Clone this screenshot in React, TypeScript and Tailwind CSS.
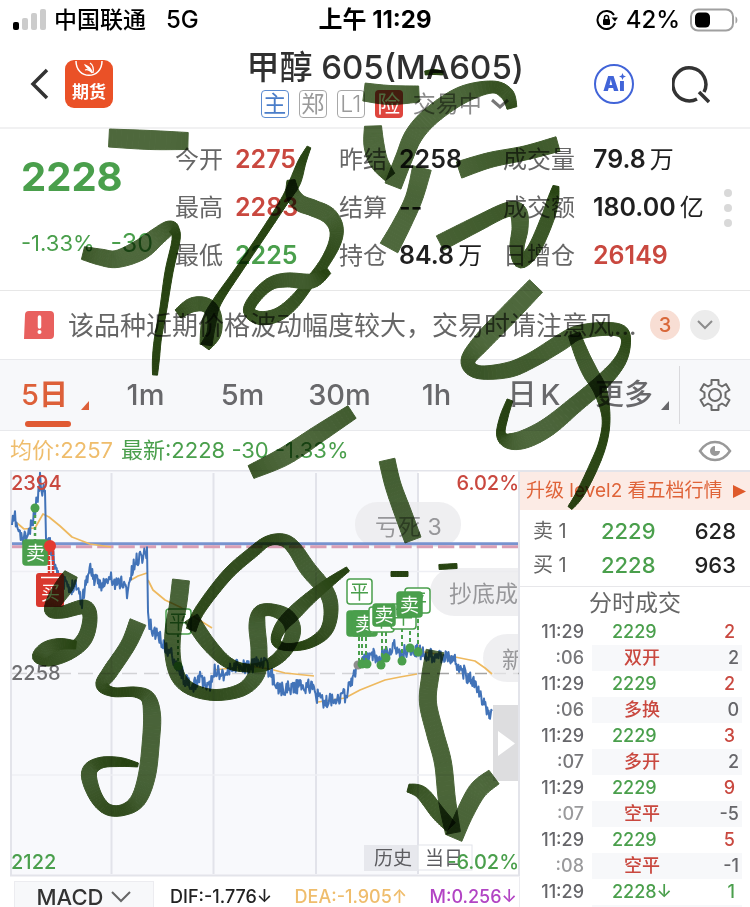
import React from "react";

type Pt = [number, number];
type InkPoint = [number, number, number];

const GREEN = "#4a9f4c";
const ORANGE = "#efbd6c";

const quotes = [
  [
    { label: "今开", value: "2275", tone: "text-[#c9483f]" },
    { label: "最高", value: "2283", tone: "text-[#c9483f]" },
    { label: "最低", value: "2225", tone: "text-[#4a9f4c]" },
  ],
  [
    { label: "昨结", value: "2258", tone: "text-[#1f1f1f]" },
    { label: "结算", value: "--", tone: "text-[#1f1f1f]" },
    { label: "持仓", value: "84.8", unit: "万", tone: "text-[#1f1f1f]" },
  ],
  [
    { label: "成交量", value: "79.8", unit: "万", tone: "text-[#1f1f1f]" },
    { label: "成交额", value: "180.00", unit: "亿", tone: "text-[#1f1f1f]" },
    { label: "日增仓", value: "26149", tone: "text-[#c9483f]" },
  ],
];

const trades = [
  { sec: ":06", price: "2229", lots: "2", kind: "双开", delta: "2" },
  { sec: ":06", price: "2229", lots: "2", kind: "多换", delta: "0" },
  { sec: ":07", price: "2229", lots: "3", kind: "多开", delta: "2" },
  { sec: ":07", price: "2229", lots: "9", kind: "空平", delta: "-5", dim: true },
  { sec: ":08", price: "2229", lots: "5", kind: "空平", delta: "-1", dim: true },
  { sec: ":08", price: "2228", lots: "1", kind: "空换", delta: "0", dim: true, down: true },
];

const priceAnchors: Pt[] = [
  [12, 525], [15, 518], [18, 530], [22, 540], [28, 535], [33, 522], [37, 500], [40, 480], [43, 492], [45, 484],
  [46, 535], [50, 545], [54, 560], [58, 572], [62, 588], [66, 580], [69, 594], [75, 580], [82, 602], [86, 580],
  [91, 568], [95, 582], [100, 583], [105, 584], [111, 578], [115, 585], [122, 581], [127, 592], [133, 568],
  [138, 558], [143, 555], [147, 550], [148, 618], [152, 630], [158, 635], [165, 648], [172, 655], [180, 670],
  [188, 685], [192, 690], [200, 675], [208, 690], [212, 682], [214, 670], [225, 674], [235, 665], [250, 668],
  [262, 660], [272, 676], [280, 690], [290, 687], [300, 686], [314, 687], [317, 696], [325, 703], [335, 697],
  [345, 696], [350, 685], [356, 668], [365, 660], [372, 655], [380, 657], [390, 651], [395, 646], [400, 655],
  [408, 650], [415, 650], [425, 655], [440, 655], [452, 658], [462, 670], [475, 685], [482, 700], [488, 712], [492, 715],
];

function pricePath() {
  let seed = 11;
  const rand = () => {
    seed = (seed * 16807) % 2147483647;
    return seed / 2147483647 - 0.5;
  };
  let d = `M${priceAnchors[0][0]},${priceAnchors[0][1]}`;
  for (let i = 1; i < priceAnchors.length; i++) {
    const [x0, y0] = priceAnchors[i - 1];
    const [x1, y1] = priceAnchors[i];
    const n = Math.max(1, Math.round((x1 - x0) / 0.7));
    for (let k = 1; k <= n; k++) {
      const t = k / n;
      d += `L${(x0 + (x1 - x0) * t).toFixed(1)},${(y0 + (y1 - y0) * t + rand() * 15).toFixed(1)}`;
    }
  }
  return d;
}

function ribbon(points: InkPoint[]) {
  const samples: InkPoint[] = [];
  for (let i = 0; i < points.length - 1; i++) {
    const a = points[Math.max(0, i - 1)];
    const b = points[i];
    const c = points[i + 1];
    const e = points[Math.min(points.length - 1, i + 2)];
    for (let k = 0; k < 8; k++) {
      const t = k / 8;
      const f = (j: 0 | 1 | 2) =>
        0.5 * (2 * b[j] + (c[j] - a[j]) * t + (2 * a[j] - 5 * b[j] + 4 * c[j] - e[j]) * t * t + (3 * b[j] - a[j] - 3 * c[j] + e[j]) * t * t * t);
      samples.push([f(0), f(1), Math.max(3, f(2))]);
    }
  }
  samples.push(points[points.length - 1]);
  const edges = samples.map((p, i) => {
    const q = samples[Math.max(0, i - 1)];
    const r = samples[Math.min(samples.length - 1, i + 1)];
    const dx = r[0] - q[0];
    const dy = r[1] - q[1];
    const len = Math.hypot(dx, dy) || 1;
    const nx = (-dy / len) * (p[2] / 2);
    const ny = (dx / len) * (p[2] / 2);
    return { l: [p[0] + nx, p[1] + ny], r: [p[0] - nx, p[1] - ny], w: p[2] };
  });
  return edges.slice(1).map((e, i) => {
    const s = edges[i];
    const k = Math.min(1, Math.max(0, (e.w - 8) / 10));
    const fill = `rgb(${Math.round(40 + 38 * k)},${Math.round(68 + 36 * k)},${Math.round(18 + 42 * k)})`;
    return { fill, pts: `${s.l} ${e.l} ${e.r} ${s.r}` };
  });
}

const ink: InkPoint[][] = [
  [[109, 138, 18], [150, 140, 19], [188, 141, 17]],
  [[83, 253, 13], [100, 257, 16], [117, 259, 17], [140, 250, 20], [158, 236, 17], [169, 228, 14], [174, 229, 10], [176, 240, 8], [169, 272, 8], [163, 311, 7], [158, 338, 7], [156, 358, 7], [155, 375, 5]],
  [[309, 147, 4], [302, 162, 8], [295, 182, 11], [285, 200, 8], [267, 228, 7], [240, 268, 7], [217, 302, 9], [209, 322, 14], [206, 345, 12]],
  [[178, 314, 10], [192, 305, 14], [206, 305, 14], [214, 315, 14], [214, 333, 14], [205, 347, 10]],
  [[291, 180, 8], [293, 194, 14], [300, 203, 16], [313, 208, 16], [328, 215, 16], [336, 227, 14], [335, 242, 12], [325, 262, 10], [310, 282, 10], [293, 303, 12], [277, 315, 13], [260, 318, 13], [249, 311, 11], [255, 298, 11], [270, 284, 12], [287, 280, 14], [312, 281, 14], [329, 271, 6]],
  [[364, 92, 18], [390, 95, 19], [419, 94, 16]],
  [[512, 108, 10], [507, 94, 13], [492, 87, 12], [462, 95, 17], [432, 115, 18], [414, 135, 18], [404, 158, 17], [393, 186, 17]],
  [[373, 126, 17], [374, 145, 20], [379, 162, 18], [390, 177, 12]],
  [[425, 73, 4], [434, 72, 5], [443, 73, 4]],
  [[459, 170, 17], [490, 160, 15], [525, 153, 14], [558, 144, 15]],
  [[422, 168, 19], [414, 198, 17], [402, 224, 18], [389, 248, 20]],
  [[440, 243, 16], [475, 225, 15], [506, 210, 14], [518, 212, 17], [520, 228, 16], [517, 248, 14], [521, 262, 12], [534, 249, 13], [547, 220, 13], [553, 200, 11], [556, 186, 6]],
  [[536, 286, 18], [508, 315, 19], [482, 342, 18], [468, 361, 14], [478, 372, 13], [508, 370, 15], [532, 360, 15], [560, 343, 16], [577, 333, 14], [602, 329, 13], [621, 331, 12], [626, 342, 9], [620, 361, 12], [602, 382, 15], [575, 405, 16], [548, 427, 18], [525, 439, 18], [509, 441, 15], [501, 434, 9], [504, 417, 8], [510, 400, 6]],
  [[574, 334, 12], [582, 355, 14], [590, 372, 15], [600, 390, 13], [606, 417, 8], [603, 442, 8], [593, 468, 9], [580, 494, 8], [570, 508, 5]],
  [[352, 412, 15], [320, 433, 17], [285, 456, 18], [251, 472, 14]],
  [[387, 460, 16], [393, 485, 16], [403, 513, 17], [413, 540, 17]],
  [[391, 574, 5], [408, 574, 5]],
  [[439, 567, 5], [457, 566, 5]],
  [[71, 574, 14], [65, 585, 18], [55, 600, 16], [51, 611, 12], [63, 612, 12], [84, 607, 14], [90, 617, 14], [85, 638, 15], [70, 652, 14], [50, 660, 12], [38, 657, 11], [46, 649, 14], [60, 644, 11], [76, 645, 8]],
  [[138, 622, 17], [128, 645, 15], [110, 672, 15], [102, 685, 12], [113, 692, 9], [135, 692, 10], [148, 698, 14], [152, 715, 17], [151, 740, 17], [147, 775, 17], [138, 800, 15], [123, 810, 11], [107, 809, 11], [95, 795, 13], [89, 773, 15], [100, 763, 11], [120, 762, 9], [138, 765, 4]],
  [[181, 580, 17], [178, 605, 17], [173, 632, 16], [173, 658, 15], [179, 678, 14], [193, 690, 12], [217, 695, 11], [243, 689, 13], [257, 673, 16], [259, 650, 16], [257, 625, 16], [260, 612, 13], [272, 610, 12], [287, 617, 15], [293, 632, 15], [284, 652, 13], [267, 665, 10], [247, 668, 8], [227, 662, 11], [207, 642, 14], [191, 618, 15]],
  [[191, 630, 10], [200, 610, 10], [227, 575, 11], [253, 552, 11], [268, 541, 10], [283, 540, 12], [294, 548, 14], [308, 569, 16], [326, 591, 15], [331, 610, 14], [326, 631, 12], [308, 644, 9], [286, 647, 7], [276, 641, 9], [281, 627, 12], [293, 614, 14], [310, 598, 12], [330, 582, 9], [348, 569, 5]],
  [[435, 651, 18], [430, 678, 17], [428, 703, 17], [435, 733, 17], [443, 763, 17], [447, 800, 17], [453, 833, 15]],
  [[408, 788, 8], [422, 793, 13], [438, 813, 14], [451, 827, 12]],
  [[494, 777, 17], [478, 790, 18], [465, 813, 17], [454, 838, 17]],
];

function InkLayer() {
  return (
    <svg className="pointer-events-none absolute left-0 top-0 mix-blend-multiply" width="750" height="907" viewBox="0 0 750 907" aria-hidden="true">
      {ink.map((s, i) => (
        <g key={i} className="mix-blend-multiply">
          {ribbon(s).map((q, k) => (
            <polygon key={k} points={q.pts} fill={q.fill} stroke={q.fill} strokeWidth="1" strokeLinejoin="round" />
          ))}
        </g>
      ))}
    </svg>
  );
}

function Flag({ x, y, t, solid, color = GREEN, size = 25 }: { x: number; y: number; t: string; solid?: boolean; color?: string; size?: number }) {
  return (
    <g>
      <rect x={x} y={y} width={size} height={size} rx="3" fill={solid ? color : "#fff"} stroke={color} strokeWidth="1.5" />
      <text x={x + size / 2} y={y + size / 2 + 7} textAnchor="middle" fontSize="19" fill={solid ? "#fff" : color}>{t}</text>
    </g>
  );
}

function Chart() {
  const stems: [number, number, number][] = [[359, 637, 664], [362, 637, 664], [366, 637, 664], [382, 632, 664], [386, 632, 658], [402, 628, 660], [410, 617, 648], [418, 612, 652]];
  return (
    <svg className="block w-full" viewBox="0 470 520 407" role="img" aria-label="5日分时走势">
      <rect x="11" y="470" width="407" height="405" fill="#f8f9fc" />
      <path d="M111.5 473V874M213.5 473V874M316 473V874M418 473V874" stroke="#e2e3ea" strokeWidth="2" />
      <path d="M11 571.5H519M11 775H519" stroke="#eeeff4" strokeWidth="1.5" />
      <path d="M10 470.5H520M11 470V876M519 470V876M10 875.5H520" stroke="#e3e4ea" strokeWidth="2" fill="none" />
      <path d="M12 673.5H418" stroke="#d2d3d6" strokeWidth="1.5" strokeDasharray="15 7" />
      <path d="M418 673.5H519" stroke="#a5a5a5" strokeWidth="1.5" strokeDasharray="12 7" />
      <g fill="#ebebed" fillOpacity="0.8">
        <rect x="355" y="502" width="106" height="45" rx="22" />
        <path d="M518 568H454a24 24 0 0 0 0 48H518zM518 634H507a24 24 0 0 0 0 48H518z" />
      </g>
      <g fontSize="23" fill="#97979a">
        <text x="375" y="535">亏死 3</text>
        <text x="449" y="602">抄底成</text>
      </g>
      <svg x="500" y="640" width="18" height="36" viewBox="500 640 18 36"><text x="502" y="668" fontSize="23" fill="#97979a">新</text></svg>
      <path d="M12 543.8H518" stroke="#7893cf" strokeWidth="3" />
      <path d="M12 546.8H518" stroke="#d99eb4" strokeWidth="3" strokeDasharray="16.3 5" strokeDashoffset="0" />
      <g fill="none" stroke="#eeb95f" strokeWidth="1.7" strokeLinejoin="round">
        <path d="M17 523L24 529L35 528L43 514L49 517L60 526L72 537L90 544L111 547" />
        <path d="M131 580L138 576L147 573" />
        <path d="M148 580L153 590L165 600L180 607L196 618L212 628" />
        <path d="M214 670L250 666L270 669L285 673L314 676" />
        <path d="M318 702L345 698L360 690L385 680L400 677L417 674" />
        <path d="M418 645L424 652L455 657L475 661L485 668L492 674" />
      </g>
      <path d={pricePath()} fill="none" stroke="#4273b8" strokeWidth="2" strokeLinejoin="round" />
      <path d="M35 515V542" stroke={GREEN} strokeWidth="2.5" strokeDasharray="3 3" />
      <circle cx="35" cy="508" r="4.5" fill={GREEN} />
      <Flag x={23} y={540} t="卖" solid />
      <path d="M49 546V578M53 546V578" stroke="#d9382f" strokeWidth="2.5" strokeDasharray="4 1" />
      <circle cx="50" cy="546" r="6" fill="#e33a31" />
      <rect x="36" y="573" width="28" height="34" rx="3" fill="#d9382f" />
      <path d="M41 577.5H59" stroke="#fff" strokeWidth="1.5" />
      <text x="50.5" y="600" textAnchor="middle" fontSize="19" fill="#fff">买</text>
      <path d="M178 634V662" stroke={GREEN} strokeWidth="2" strokeDasharray="3 3" />
      <circle cx="178" cy="666" r="4.5" fill={GREEN} />
      <Flag x={166} y={609} t="平" />
      {stems.map(([x, a, b]) => (
        <path key={x} d={`M${x} ${a}V${b}`} stroke={GREEN} strokeWidth="2" strokeDasharray="4 3" />
      ))}
      <circle cx="358" cy="665" r="4.5" fill="#8d8d8d" />
      {([[362, 664], [367, 664], [381, 665], [386, 658], [402, 661], [410, 648], [418, 652]] as Pt[]).map(([x, y]) => (
        <circle key={x} cx={x} cy={y} r="4.5" fill={GREEN} />
      ))}
      <Flag x={347} y={579} t="平" />
      <Flag x={347} y={611} t="" solid />
      <Flag x={352} y={611} t="卖" solid />
      <Flag x={369} y={607} t="平" />
      <Flag x={391} y={604} t="平" />
      <Flag x={373} y={604} t="卖" solid size={22} />
      <Flag x={405} y={588} t="平" />
      <Flag x={397} y={592} t="卖" solid />
      <rect x="493" y="705" width="25" height="76" fill="#dddddf" />
      <path d="M498 731L515 743.5L498 756Z" fill="#fff" />
      <rect x="364" y="845" width="54" height="26" fill="#e7e8ed" />
      <rect x="418" y="845" width="54" height="25" fill="#fff" fillOpacity="0.6" stroke="#e2e3ea" />
      <g fontSize="19" fill="#5c5c60">
        <text x="374" y="865">历史</text>
        <text x="425" y="865">当日</text>
      </g>
      <g fontSize="20" fontWeight="500">
        <text x="11" y="490" fill="#c9483f">2394</text>
        <text x="519" y="490" fill="#c9483f" textAnchor="end">6.02%</text>
        <text x="11" y="680" fill="#6f6f72">2258</text>
        <text x="11" y="869" fill={GREEN}>2122</text>
        <text x="519" y="869" fill={GREEN} textAnchor="end">-6.02%</text>
      </g>
    </svg>
  );
}

function StatusBar() {
  return (
    <div className="flex h-10 items-center text-black">
      <div className="flex flex-1 items-center pl-3">
        <svg width="34" height="22" viewBox="0 0 34 22" aria-hidden="true">
          <rect x="1" y="13" width="6" height="8" rx="2" fill="#000" />
          <rect x="10" y="9" width="6" height="12" rx="2" fill="#ccc" />
          <rect x="19" y="4" width="6" height="17" rx="2" fill="#ccc" />
          <rect x="28" y="0" width="6" height="21" rx="2" fill="#ccc" />
        </svg>
        <span className="ml-2 text-[23px] font-medium">中国联通</span>
        <span className="ml-5 text-2xl font-medium">5G</span>
      </div>
      <div className="text-2xl font-bold">上午 11:29</div>
      <div className="flex flex-1 items-center justify-end pr-3">
        <svg width="22" height="22" viewBox="0 0 22 22" fill="none" stroke="#000" strokeWidth="2" aria-hidden="true">
          <path d="M18 6A9 9 0 1 0 19 14" />
          <path d="M15.500 8.500H22L19 12.500Z" fill="#000" stroke="none" />
          <rect x="7" y="10" width="7" height="6" rx="1" fill="#000" stroke="none" />
          <path d="M8.500 10V8.500a2 2 0 0 1 4 0V10" strokeWidth="1.500" />
        </svg>
        <span className="ml-2 text-2xl font-medium">42%</span>
        <svg className="ml-2" width="50" height="24" viewBox="0 0 50 24" aria-hidden="true">
          <rect x="3" y="1.500" width="42" height="21" rx="7" fill="none" stroke="#a0a0a0" strokeWidth="2" />
          <rect x="7" y="4.500" width="15" height="15" rx="4.500" fill="#000" />
          <path d="M47.500 8.500c2.500 1 2.500 6 0 7z" fill="#a0a0a0" />
        </svg>
      </div>
    </div>
  );
}

function Header() {
  return (
    <header className="flex h-[89px] border-b-2 border-[#f1f1f2] text-[#303030]">
      <div className="flex flex-1 items-center gap-4 pl-[30px]">
        <button aria-label="返回">
          <svg width="19" height="32" viewBox="0 0 19 32" fill="none" stroke="#333" strokeWidth="3.500"><path d="M17 2L3 16L17 30" /></svg>
        </button>
        <button aria-label="期货" className="relative flex h-12 w-12 items-end justify-center overflow-hidden rounded-[9px] bg-[#ea5127] pb-1">
          <svg className="absolute left-0 top-0" width="48" height="48" viewBox="0 0 48 48" fill="none" stroke="#fff" strokeWidth="1.500">
            <path d="M11 1C11 20 37 20 37 1" />
            <path d="M19 4C23 5 27 8 28 13C26 11 21 9 19 4Z" fill="#fff" stroke="none" />
            <path d="M25 3C28 5 29 8 28 13M20 10C23 9 26 11 27 13" strokeWidth="1.200" />
          </svg>
          <span className="text-[17px] font-bold leading-6 text-white">期货</span>
        </button>
      </div>
      <div className="flex flex-col items-center pt-2">
        <h1 className="text-[33px] font-medium leading-[38px]">甲醇 605(MA605)</h1>
        <div className="mt-1 flex items-center gap-[10px] text-[23px] leading-7">
          <span className="flex h-7 w-7 items-center justify-center rounded border border-[#5b8bd0] text-[#4a7dc9]">主</span>
          <span className="flex h-7 w-7 items-center justify-center rounded border border-[#a8a8a8] text-[#9a9a9a]">郑</span>
          <span className="flex h-7 w-7 items-center justify-center rounded border border-[#a8a8a8] font-light text-[#9a9a9a]">L1</span>
          <span className="flex h-7 w-7 items-center justify-center rounded bg-[#de453d] text-white">险</span>
          <button className="flex items-center gap-2 text-[#8b8b8b]">
            交易中
            <svg width="20" height="12" viewBox="0 0 20 12" fill="none" stroke="#777" strokeWidth="3"><path d="M2 2L10 9L18 2" /></svg>
          </button>
        </div>
      </div>
      <div className="flex w-[226px] shrink-0 items-center justify-end gap-[38px] pr-10">
        <button aria-label="Ai" className="relative flex h-10 w-10 items-center justify-center rounded-full border-2 border-[#4164d8] text-[20px] font-black text-[#4164d8]">
          Ai
          <svg className="absolute right-[5px] top-[6px]" width="9" height="9" viewBox="0 0 9 9"><rect width="9" height="9" fill="#fff" /><path d="M4.500 1L5.500 3.500L8 4.500L5.500 5.500L4.500 8L3.500 5.500L1 4.500L3.500 3.500Z" fill="#4164d8" /></svg>
        </button>
        <button aria-label="搜索">
          <svg width="38" height="40" viewBox="0 0 38 40" fill="none" stroke="#333" strokeWidth="3.500">
            <path d="M25 35A16.500 16.500 0 1 1 32 28" />
            <path d="M27 28L37 38" />
          </svg>
        </button>
      </div>
    </header>
  );
}

export default function App() {
  return (
    <main className="relative h-screen w-full overflow-hidden bg-white font-['Inter','Noto_Sans_CJK_SC',sans-serif]">
      <StatusBar />
      <Header />
      <section className="flex h-[162px] border-b border-[#e7e7e7] text-2xl">
        <div className="w-[175px] shrink-0 pl-[21px] pt-6 text-[#4a9f4c]">
          <div className="text-[40px] font-bold leading-[48px]">2228</div>
          <div className="mt-7 flex items-center gap-4 text-[22px] leading-7">
            <span>-1.33%</span>
            <span className="text-[25px]">-30</span>
          </div>
        </div>
        <div className="flex min-w-0 flex-1 pt-[7px]">
          {quotes.map((col, i) => (
            <dl key={i} className={i === 2 ? "flex-1" : "w-[164px] shrink-0"}>
              {col.map((q) => (
                <div key={q.label} className={i === 2 ? "flex h-12 items-center gap-[18px]" : "flex h-12 items-center gap-3"}>
                  <dt className="whitespace-nowrap text-[#666]">{q.label}</dt>
                  <dd className={`whitespace-nowrap text-[25px] font-semibold ${q.tone}`}>
                    {q.value}
                    {q.unit && <span className="ml-1 text-2xl font-normal">{q.unit}</span>}
                  </dd>
                </div>
              ))}
            </dl>
          ))}
        </div>
        <button aria-label="更多行情" className="flex w-11 shrink-0 flex-col items-center justify-center gap-[7px] pt-1 pb-2">
          <span className="h-2 w-2 rounded-full bg-[#d9d9d9]" />
          <span className="h-2 w-2 rounded-full bg-[#d9d9d9]" />
          <span className="h-2 w-2 rounded-full bg-[#d9d9d9]" />
        </button>
      </section>

      <section className="flex h-[68px] items-center pl-6 pr-[30px]">
        <svg width="30" height="28" viewBox="0 0 30 28" aria-hidden="true">
          <path d="M5 0H26a4 4 0 0 1 4 4V24a4 4 0 0 1-4 4H0L1 4a4 4 0 0 1 4-4Z" fill="#e8605e" />
          <path d="M15.500 6V16" stroke="#fff" strokeWidth="3.500" strokeLinecap="round" />
          <circle cx="15.500" cy="21" r="2" fill="#fff" />
        </svg>
        <p className="ml-[14px] min-w-0 flex-1 whitespace-nowrap text-[26px] text-[#666]">该品种近期价格波动幅度较大，交易时请注意风...</p>
        <span className="ml-3 flex h-[30px] w-[30px] shrink-0 items-center justify-center rounded-full bg-[#f8ded4] text-xl font-medium text-[#d9683a]">3</span>
        <button aria-label="展开" className="ml-[10px] flex h-[30px] w-[30px] shrink-0 items-center justify-center rounded-full bg-[#ececec]">
          <svg width="16" height="10" viewBox="0 0 16 10" fill="none" stroke="#8c8c8c" strokeWidth="2"><path d="M1 1L8 8L15 1" /></svg>
        </button>
      </section>

      <nav className="flex h-[72px] border-y border-[#e8e9ec] bg-[#f7f8fa] text-[29px] font-medium text-[#68686b]">
        <button className="relative w-[97px] pl-[21px] text-left text-[#dd6039]">
          5<span className="font-bold">日</span>
          <span className="absolute bottom-[3px] left-[25px] h-[6px] w-[46px] rounded-full bg-[#e05a33]" />
          <svg className="absolute bottom-5 right-2" width="8" height="9" viewBox="0 0 8 9"><path d="M8 0V9H0Z" fill="#dd6039" /></svg>
        </button>
        <button className="w-[97px]">1m</button>
        <button className="w-[97px]">5m</button>
        <button className="w-[97px]">30m</button>
        <button className="w-[97px]">1h</button>
        <button className="flex w-[98px] items-center justify-center gap-1"><span>日</span><span>K</span></button>
        <button className="relative flex-1 pl-3 text-left">
          更多
          <svg className="absolute bottom-5 right-[10px]" width="8" height="9" viewBox="0 0 8 9"><path d="M8 0V9H0Z" fill="#68686b" /></svg>
        </button>
        <button aria-label="设置" className="my-[6px] flex w-[71px] items-center justify-center border-l border-[#d9d9dc]">
          <svg width="32" height="34" viewBox="0 0 32 34" fill="none" stroke="#6a6a6a" strokeWidth="2" strokeLinejoin="round">
            <path d="M12.500 2H19.500V6.500L23 8.500L27 6L30.500 12L26.500 14.500V19.500L30.500 22L27 28L23 25.500L19.500 27.500V32H12.500V27.500L9 25.500L5 28L1.500 22L5.500 19.500V14.500L1.500 12L5 6L9 8.500L12.500 6.500Z" />
            <circle cx="16" cy="17" r="6" />
          </svg>
        </button>
      </nav>

      <div className="flex h-[39px] items-center justify-between pl-[10px] pr-[18px] text-[22px]">
        <p className="flex gap-2">
          <span className="text-[#efbd6c]">均价:2257</span>
          <span className="text-[#4a9f4c]">最新:2228 -30 -1.33%</span>
        </p>
        <button aria-label="显示">
          <svg width="34" height="22" viewBox="0 0 34 22" fill="none" stroke="#999" strokeWidth="2.500">
            <path d="M2 11C10 -1 24 -1 32 11C24 23 10 23 2 11Z" />
            <path d="M17 6A5 5 0 1 0 22 11H17Z" fill="#999" stroke="none" />
          </svg>
        </button>
      </div>

      <div className="flex">
        <div className="min-w-0 flex-1">
          <Chart />
          <div className="flex items-start gap-3 whitespace-nowrap border-r border-[#ececf0] pl-[14px] pt-1 font-medium">
            <button className="flex h-8 w-[140px] shrink-0 items-center justify-center gap-2 border border-[#ececf0] bg-[#f7f8fa] text-[22px] text-[#333]">
              MACD
              <svg width="20" height="12" viewBox="0 0 20 12" fill="none" stroke="#666" strokeWidth="2"><path d="M1 1L10 10L19 1" /></svg>
            </button>
            <div className="flex flex-1 justify-between pl-1 pr-[2px] text-lg leading-8">
              <span className="text-[#222]">DIF:-1.776↓</span>
              <span style={{ color: ORANGE }}>DEA:-1.905↑</span>
              <span className="text-[#b244c4]">M:0.256↓</span>
            </div>
          </div>
        </div>
        <aside className="w-[230px] border-t-2 border-[#e3e4ea]">
          <button className="flex h-[38px] w-full items-center justify-between bg-[#fcebe5] pl-[6px] pr-1 text-[19px] text-[#df6338]">
            <span className="whitespace-nowrap">升级 level2 看五档行情</span>
            <svg width="13" height="13" viewBox="0 0 13 13"><path d="M0 0L13 6.500L0 13Z" fill="#df5a2b" /></svg>
          </button>
          <div className="border-b border-[#e7e7ea] py-1 text-[22px]">
            {[["卖 1", "2229", "628"], ["买 1", "2228", "963"]].map((r) => (
              <div key={r[0]} className="flex h-[34px] items-center pl-[13px] pr-[14px]">
                <span className="w-[68px] text-xl text-[#666]">{r[0]}</span>
                <span className="flex-1 font-medium text-[#4a9f4c]">{r[1]}</span>
                <span className="font-medium text-[#222]">{r[2]}</span>
              </div>
            ))}
          </div>
          <h2 className="h-8 text-center text-[23px] leading-8 text-[#666]">分时成交</h2>
          <table className="w-full text-lg font-medium">
            <tbody>
              {trades.map((t, i) => (
                <React.Fragment key={i}>
                  <tr className="h-[26px] leading-[26px]">
                    <td className="w-[72px] p-0 pr-2 text-right text-[#66666a]">11:29</td>
                    <td className="w-[98px] p-0 pl-5 text-[#4a9f4c]">{t.price}{t.down ? "↓" : ""}</td>
                    <td className={`p-0 pr-[11px] text-right ${t.down ? "text-[#4a9f4c]" : "text-[#c9483f]"}`}>{t.lots}</td>
                  </tr>
                  <tr className="h-[26px] leading-[26px]">
                    <td className={`p-0 pr-2 text-right ${t.dim ? "text-[#9a9a9c]" : "text-[#77777a]"}`}>{t.sec}</td>
                    <td className={`bg-[#f7f8fa] p-0 pl-8 ${t.down ? "text-[#4a9f4c]" : "text-[#c9483f]"}`}>{t.kind}</td>
                    <td className="border-r-8 border-white bg-[#f7f8fa] p-0 pr-[3px] text-right text-[#66666a]">{t.delta}</td>
                  </tr>
                </React.Fragment>
              ))}
            </tbody>
          </table>
        </aside>
      </div>
      <InkLayer />
    </main>
  );
}
